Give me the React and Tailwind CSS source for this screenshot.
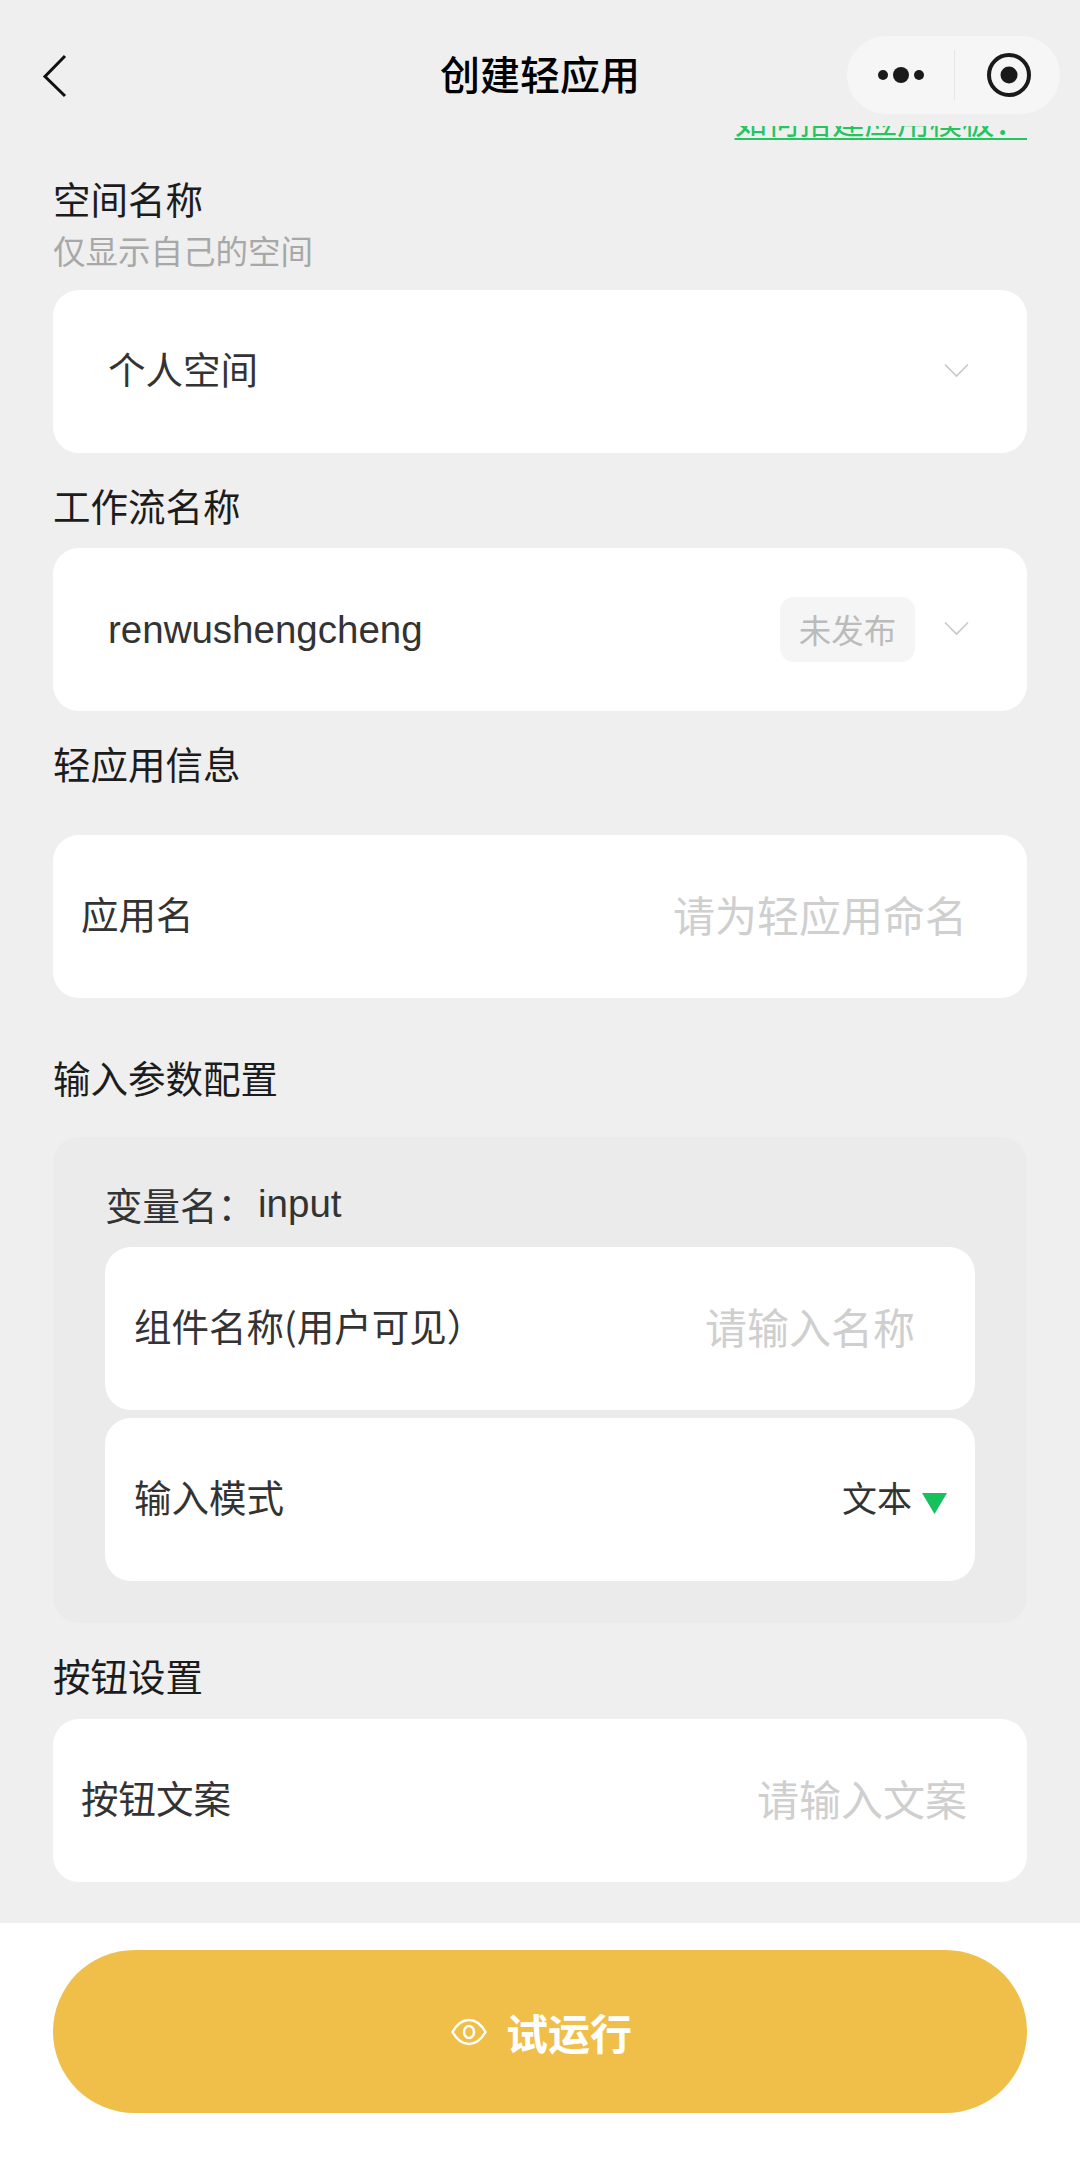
const FONT = "font-['Noto_Sans_CJK_SC','Noto_Sans',sans-serif]"

function Label({ className = '', children }) {
  return <div className={`text-[37.500px] leading-[52px] text-[#1c1c1c] ${className}`}>{children}</div>
}

function Card({ className = '', children }) {
  return (
    <div className={`h-[163px] rounded-[26px] bg-white flex items-center ${className}`}>
      {children}
    </div>
  )
}

function CardText({ children }) {
  return <span className="text-[37.500px] text-[#333] mb-[6px]">{children}</span>
}

function Placeholder({ children }) {
  return <span className="text-[42px] text-[#cfcfcf] mb-[6px]">{children}</span>
}

function Chevron() {
  return (
    <svg width="25" height="15" viewBox="0 0 25 15" fill="none" className="shrink-0 mb-[3px]">
      <path d="M1 1.500L12.500 13L24 1.500" stroke="#c8c8c8" strokeWidth="1.600" />
    </svg>
  )
}

export default function App() {
  return (
    <div className={`${FONT} w-[1080px] h-[2163px] bg-[#efefef] flex flex-col overflow-hidden`}>
      {/* Nav bar */}
      <div className="h-[126px] shrink-0 relative">
        <svg width="26" height="44" viewBox="0 0 26 44" fill="none" className="ml-[41px] translate-y-[54px]">
          <path d="M24 2L4 22.500L24 42" stroke="#111" strokeWidth="3" />
        </svg>
        <div className="absolute left-0 right-0 top-[45px] text-center text-[40px] leading-[56px] font-medium text-black">
          创建轻应用
        </div>
        <div className="absolute left-[847px] top-[36px] w-[213px] h-[78px] rounded-full bg-[#f6f6f6] flex items-center">
          <svg width="46" height="16" viewBox="0 0 46 16" className="ml-[31px]">
            <circle cx="5" cy="8" r="5" fill="#1a1a1a" />
            <circle cx="23" cy="8" r="8" fill="#1a1a1a" />
            <circle cx="41" cy="8" r="5" fill="#1a1a1a" />
          </svg>
          <div className="ml-[30px] w-px h-[50px] bg-[#e6e6e6]" />
          <svg width="44" height="44" viewBox="0 0 44 44" className="ml-[32px]">
            <circle cx="22" cy="22" r="20" fill="none" stroke="#1a1a1a" strokeWidth="4" />
            <circle cx="22" cy="22" r="8.500" fill="#1a1a1a" />
          </svg>
        </div>
      </div>

      {/* Scrolled under the nav bar, only the bottom of the link shows */}
      <div className="h-[14px] shrink-0 overflow-hidden flex justify-end items-end pr-[53px]">
        <span className="text-[32.500px] leading-[40px] text-[#22c55e] underline underline-offset-[4px] decoration-2 whitespace-nowrap">
          如何搭建应用模板：
        </span>
      </div>

      <div className="px-[53px] flex-1 flex flex-col">
        <Label className="mt-[32px]">空间名称</Label>
        <div className="text-[32.500px] leading-[44px] text-[#a8a8a8] mt-[4px]">仅显示自己的空间</div>
        <Card className="mt-[18px] pl-[55px] pr-[58px] justify-between">
          <CardText>个人空间</CardText>
          <Chevron />
        </Card>

        <Label className="mt-[26px]">工作流名称</Label>
        <Card className="mt-[17px] pl-[55px] pr-[58px]">
          <span className="text-[38.500px] text-[#333] font-['Liberation_Sans','Noto_Sans_CJK_SC',sans-serif]">renwushengcheng</span>
          <span className="ml-auto h-[65px] w-[135px] rounded-[14px] bg-[#f5f5f5] text-[32.500px] text-[#bbbbbb] flex items-center justify-center">
            未发布
          </span>
          <span className="ml-[29px] flex"><Chevron /></span>
        </Card>

        <Label className="mt-[26px]">轻应用信息</Label>
        <Card className="mt-[46px] pl-[28px] pr-[60px] justify-between">
          <CardText>应用名</CardText>
          <Placeholder>请为轻应用命名</Placeholder>
        </Card>

        <Label className="mt-[53px]">输入参数配置</Label>
        <div className="mt-[34px] h-[486px] rounded-[26px] bg-[#ebebeb] px-[52px] flex flex-col">
          <div className="mt-[49px] h-[36px] flex items-center text-[37.500px] text-[#333] leading-none">
            变量名：<span className="font-['Liberation_Sans',sans-serif] text-[38.500px] ml-[3px]">input</span>
          </div>
          <Card className="mt-[25px] pl-[29px] pr-[60px] justify-between">
            <CardText>组件名称(用户可见）</CardText>
            <Placeholder>请输入名称</Placeholder>
          </Card>
          <Card className="mt-[8px] pl-[29px] pr-[28px]">
            <CardText>输入模式</CardText>
            <span className="ml-auto text-[35px] text-[#333] mb-[4px]">文本</span>
            <svg width="25" height="21" viewBox="0 0 25 21" className="ml-[10px] mt-[7px]">
              <path d="M0 0H25L12.500 21Z" fill="#16c05c" />
            </svg>
          </Card>
        </div>

        <Label className="mt-[26px]">按钮设置</Label>
        <Card className="mt-[18px] pl-[28px] pr-[60px] justify-between">
          <CardText>按钮文案</CardText>
          <Placeholder>请输入文案</Placeholder>
        </Card>
      </div>

      {/* Footer */}
      <div className="h-[240px] shrink-0 bg-white px-[53px] pt-[27px]">
        <button className="w-full h-[163px] rounded-full bg-[#efbf4a] text-white flex items-center justify-center pl-[3px]">
          <svg width="36" height="28" viewBox="0 0 36 28" fill="none" stroke="currentColor" className="mr-[19px]">
            <path d="M1.500 14C6 6 11.500 2 18 2s12 4 16.500 12C30 22 24.500 26 18 26S6 22 1.500 14Z" strokeWidth="2.500" />
            <ellipse cx="18" cy="14" rx="5" ry="6" strokeWidth="2.500" />
          </svg>
          <span className="text-[42px] font-bold">试运行</span>
        </button>
      </div>
    </div>
  )
}
